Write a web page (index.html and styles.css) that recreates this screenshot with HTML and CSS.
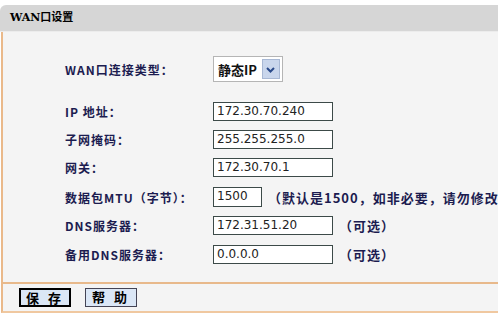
FILE: index.html
```html
<!DOCTYPE html>
<html lang="zh-CN">
<head>
    <meta charset="UTF-8">
    <title>WAN口设置</title>
    <link rel="stylesheet" href="styles.css">
</head>
<body>
    <div class="panel">
        <div class="title">WAN口设置</div>
        <div class="content">
            <div class="row row-type">
                <span class="label">WAN口连接类型：</span>
                <span class="select">静态IP<span class="arrow"><svg width="13" height="13" viewBox="0 0 13 13"><path d="M3 5 L6.5 8.5 L10 5" fill="none" stroke="#2a4a8a" stroke-width="2"/></svg></span></span>
            </div>
            <div class="row tight">
                <span class="label">IP 地址：</span>
                <span class="field">172.30.70.240</span>
            </div>
            <div class="row tight">
                <span class="label">子网掩码：</span>
                <span class="field">255.255.255.0</span>
            </div>
            <div class="row">
                <span class="label">网关：</span>
                <span class="field">172.30.70.1</span>
            </div>
            <div class="row row-mtu">
                <span class="label">数据包MTU（字节）：</span>
                <span class="field short">1500</span>
                <span class="note">（默认是1500，如非必要，请勿修改）</span>
            </div>
            <div class="row">
                <span class="label">DNS服务器：</span>
                <span class="field">172.31.51.20</span>
                <span class="note">（可选）</span>
            </div>
            <div class="row last">
                <span class="label">备用DNS服务器：</span>
                <span class="field">0.0.0.0</span>
                <span class="note">（可选）</span>
            </div>
        </div>
        <div class="buttons">
            <span class="btn active">保 存</span>
            <span class="btn">帮 助</span>
        </div>
    </div>
</body>
</html>
```

FILE: styles.css
```css
body {
    margin: 0;
    background-color: #fff;
    font-family: "Noto Sans CJK SC", "DejaVu Sans", sans-serif;
    font-size: 12px;
    color: #1c1c50;
    overflow: hidden;
}
.panel {
    margin-top: 5px;
    width: 520px;
}
.title {
    height: 26px;
    line-height: 26px;
    background-color: #d6d6d6;
    border-top-left-radius: 6px;
    border-bottom: 1px solid #ececec;
    padding-left: 10px;
    color: #000;
    font-family: "DejaVu Serif", "Noto Sans CJK SC", serif;
    font-size: 11px;
    font-weight: bold;
}
.content {
    background-color: #f4f4f4;
    border-left: 2px solid #eab98a;
    border-bottom: 2px solid #e8b98b;
    margin-left: 1px;
    padding: 24px 0 18px 0;
}
.row {
    display: flex;
    align-items: center;
    height: 19px;
    margin-bottom: 10px;
}
.row.tight {
    margin-bottom: 9px;
}
.row.last {
    margin-bottom: 0;
}
.row-type {
    height: 26px;
    margin-bottom: 20px;
}
.row-mtu {
    height: 20px;
    margin-top: 2px;
    margin-bottom: 9px;
}
.label {
    width: 148px;
    padding-left: 62px;
    font-weight: bold;
    letter-spacing: 1px;
}
.select {
    display: flex;
    align-items: center;
    height: 24px;
    padding: 0 2px 0 4px;
    background-color: #fff;
    border: 1px solid #b5b5b5;
    color: #111;
    font-weight: bold;
    font-size: 13px;
}
.arrow {
    display: flex;
    align-items: center;
    justify-content: center;
    width: 16px;
    height: 18px;
    margin-left: 5px;
    background-color: #c9d6ec;
    border: 1px solid #a8b8d4;
}
.field {
    box-sizing: border-box;
    width: 120px;
    height: 19px;
    line-height: 17px;
    padding-left: 3px;
    background-color: #fff;
    border: 1px solid #3c4a48;
    color: #222;
    font-family: "DejaVu Sans", sans-serif;
    font-size: 12px;
}
.field.short {
    width: 49px;
    height: 20px;
}
.note {
    margin-left: 6px;
    font-size: 13px;
    font-weight: bold;
    letter-spacing: 1px;
    white-space: nowrap;
}
.buttons {
    display: flex;
    gap: 14px;
    padding: 4px 0 4px 16px;
    margin-left: 1px;
    background-color: #f4f4f4;
    border-left: 2px solid #eab98a;
    border-bottom: 2px solid #f0c8a0;
}
.btn {
    box-sizing: border-box;
    width: 52px;
    height: 19px;
    line-height: 16px;
    text-align: center;
    background-color: #dbe7f6;
    border: 1px solid #445;
    color: #000;
    font-size: 13px;
    font-weight: bold;
    letter-spacing: 3px;
}
.btn.active {
    border: 2px solid #000;
}
```
